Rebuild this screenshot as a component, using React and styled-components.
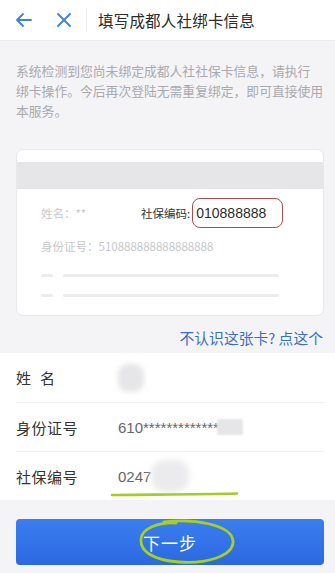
import React from 'react';
import styled, { createGlobalStyle } from 'styled-components';

const Global = createGlobalStyle`
  html, body {
    margin: 0;
    padding: 0;
    background: #f4f4f7;
    font-family: "Noto Sans CJK SC", "Noto Sans", "Liberation Sans", sans-serif;
  }
  * { box-sizing: border-box; }
`;

const Page = styled.div`
  width: 335px;
  height: 573px;
  display: flex;
  flex-direction: column;
  background: #f4f4f7;
  overflow: hidden;
`;

const Header = styled.div`
  height: 41px;
  background: #fff;
  display: flex;
  align-items: center;
  padding-left: 15px;
  border-bottom: 1px solid #ececec;
`;

const IconBtn = styled.div`
  width: ${p => p.w}px;
  display: flex;
  align-items: center;
`;

const VLine = styled.div`
  width: 1px;
  height: 24px;
  background: #efefef;
  margin: 0 11px 0 0;
`;

const Title = styled.div`
  font-size: 15.5px;
  color: #2b2b2b;
  letter-spacing: 0.2px;
`;

const Notice = styled.p`
  margin: 0;
  padding: 20px 4px 0 16px;
  font-size: 12.8px;
  line-height: 20px;
  color: #a9a9ae;
  white-space: nowrap;
`;

const Card = styled.div`
  margin: 28px 11px 0 16px;
  height: 167px;
  background: #fff;
  border: 1px solid #e8e8ec;
  border-radius: 7px;
  padding-top: 12px;
`;

const Band = styled.div`
  height: 27px;
  background: #e6e6e8;
`;

const CardBody = styled.div`
  padding: 5px 0 0 24px;
  display: flex;
  flex-direction: column;
`;

const CardRow = styled.div`
  display: flex;
  align-items: center;
  height: ${p => p.h}px;
  font-size: 11.5px;
  color: #c8c8cc;
`;

const DimLabel = styled.span`
  width: 100px;
`;

const CodeLabel = styled.span`
  color: #333;
  font-size: 11.5px;
`;

const CodeBox = styled.span`
  display: inline-flex;
  align-items: center;
  height: 30px;
  width: 91px;
  margin-left: 2px;
  padding-left: 3px;
  border: 1.5px solid #b5474a;
  border-radius: 8px;
  color: #2d2d2d;
  font-size: 14px;
  font-family: "Liberation Sans", "Noto Sans", sans-serif;
`;

const Skeleton = styled.div`
  margin-top: 5px;
  display: flex;
  flex-direction: column;
`;

const SkeletonRow = styled.div`
  display: flex;
  align-items: center;
  gap: 10px;
  height: 20px;
`;

const Bar = styled.div`
  width: ${p => p.w}px;
  height: 3px;
  border-radius: 2px;
  background: #ececef;
`;

const LinkRow = styled.div`
  margin-top: 12px;
  padding-right: 12px;
  text-align: right;
  font-size: 14.8px;
  line-height: 20px;
  color: #3a6fbf;
`;

const Form = styled.div`
  margin-top: 5px;
  background: #fff;
  padding-left: 16px;
  padding-right: 11px;
`;

const Field = styled.div`
  height: ${p => p.h}px;
  display: flex;
  align-items: center;
  border-bottom: ${p => (p.last ? 'none' : '1px solid #f0f0f0')};
  position: relative;
`;

const Label = styled.span`
  width: 102px;
  font-size: 15px;
  color: #333;
  letter-spacing: ${p => (p.spaced ? '9px' : '0.5px')};
`;

const Value = styled.span`
  display: flex;
  align-items: center;
  font-size: 15px;
  color: #666;
  font-family: "Liberation Sans", "Noto Sans", sans-serif;
`;

const Smudge = styled.span`
  display: inline-block;
  width: ${p => p.w}px;
  height: ${p => p.h}px;
  background: ${p => p.c || '#e3e3e5'};
  border-radius: ${p => p.r || 4}px;
  filter: blur(${p => p.b || 2}px);
  margin-left: ${p => p.ml || 0}px;
`;

const Underline = styled.svg`
  position: absolute;
  left: 94px;
  bottom: 2px;
`;

const ButtonWrap = styled.div`
  padding: 19px 11px 0 16px;
`;

const NextButton = styled.button`
  position: relative;
  width: 100%;
  height: 46px;
  border: none;
  border-radius: 4px;
  background: linear-gradient(180deg, #3a7ef0 0%, #2c68e0 100%);
  color: #fff;
  font-size: 17px;
  font-family: "Noto Sans CJK SC", sans-serif;
  letter-spacing: 1px;
`;

const Circle = styled.svg`
  position: absolute;
  left: 118px;
  top: 0;
`;

export default function App() {
  return (
    <Page>
      <Global />
      <Header>
        <IconBtn w={42}>
          <svg width="18" height="16" viewBox="0 0 18 16" fill="none" stroke="#3d7fe0" strokeWidth="1.8" strokeLinecap="round" strokeLinejoin="round">
            <path d="M16 8H2M8 2L2 8l6 6" />
          </svg>
        </IconBtn>
        <IconBtn w={29}>
          <svg width="14" height="14" viewBox="0 0 14 14" fill="none" stroke="#3d7fe0" strokeWidth="1.8" strokeLinecap="round">
            <path d="M1 1l12 12M13 1L1 13" />
          </svg>
        </IconBtn>
        <VLine />
        <Title>填写成都人社绑卡信息</Title>
      </Header>

      <Notice>
        系统检测到您尚未绑定成都人社社保卡信息，请执行<br />
        绑卡操作。今后再次登陆无需重复绑定，即可直接使用<br />
        本服务。
      </Notice>

      <Card>
        <Band />
        <CardBody>
          <CardRow h={38}>
            <DimLabel>姓名：**</DimLabel>
            <CodeLabel>社保编码:</CodeLabel>
            <CodeBox>010888888</CodeBox>
          </CardRow>
          <CardRow h={28}>身份证号：510888888888888888</CardRow>
          <Skeleton>
            <SkeletonRow><Bar w={12} /><Bar w={216} /></SkeletonRow>
            <SkeletonRow><Bar w={12} /><Bar w={216} /></SkeletonRow>
          </Skeleton>
        </CardBody>
      </Card>

      <LinkRow>不认识这张卡? 点这个</LinkRow>

      <Form>
        <Field h={50}>
          <Label spaced>姓名</Label>
          <Smudge w={26} h={28} r={10} b={2.5} c="#e6e6e8" />
        </Field>
        <Field h={49}>
          <Label>身份证号</Label>
          <Value>
            610*************
            <Smudge w={26} h={16} r={2} b={1} ml={-2} c="#e6e6e8" />
          </Value>
        </Field>
        <Field h={48} last>
          <Label>社保编号</Label>
          <Value>
            0247
            <Smudge w={38} h={32} r={14} b={3} c="#ebebed" />
          </Value>
          <Underline width="130" height="8" viewBox="0 0 130 8">
            <path d="M2 5 C40 4.5, 90 4.5, 127 3.5" stroke="#a6cc1e" strokeWidth="2.6" fill="none" strokeLinecap="round" />
          </Underline>
        </Field>
      </Form>

      <ButtonWrap>
        <NextButton>
          下一步
          <Circle width="104" height="46" viewBox="0 0 104 46">
            <path d="M30 3 C60 -1, 98 6, 99 22 C100 38, 70 45, 45 43 C18 41, 6 32, 7 20 C8 9, 25 3, 42 4" stroke="#a6d21e" strokeWidth="2.8" fill="none" strokeLinecap="round" />
          </Circle>
        </NextButton>
      </ButtonWrap>
    </Page>
  );
}
